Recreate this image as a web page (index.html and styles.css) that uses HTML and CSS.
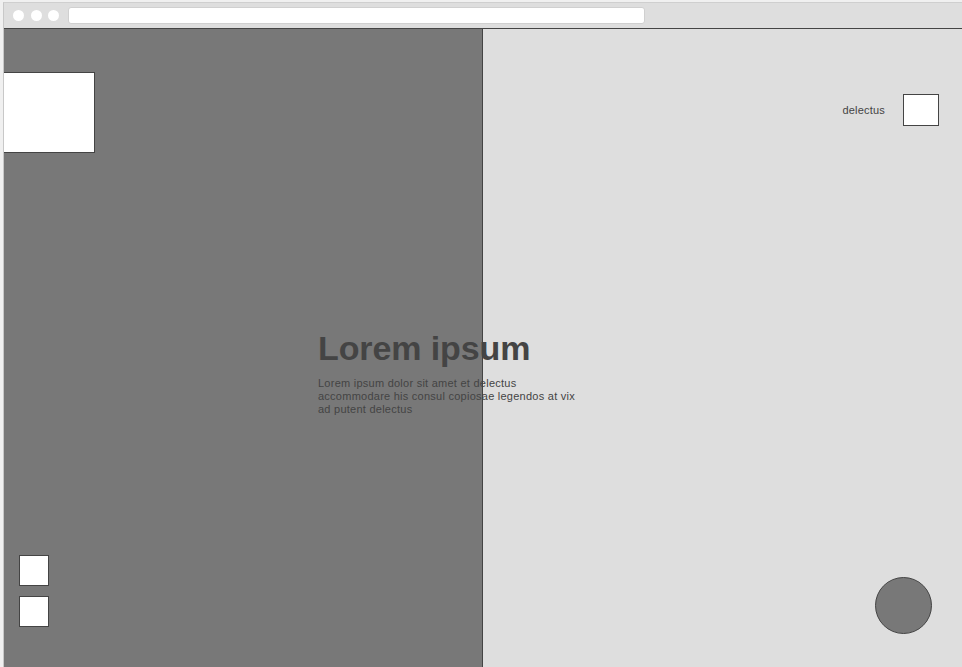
FILE: index.html
```html
<!DOCTYPE html>
<html>
<head>
<meta charset="utf-8">
<link rel="stylesheet" href="styles.css">
</head>
<body>
<div class="window">
  <div class="chrome">
    <div class="dots"><span class="dot"></span><span class="dot"></span><span class="dot"></span></div>
    <div class="address"></div>
  </div>
  <div class="content">
    <div class="left">
      <div class="logo-box"></div>
      <div class="side-buttons">
        <div class="sq"></div>
        <div class="sq"></div>
      </div>
    </div>
    <div class="right">
      <div class="topnav">
        <span class="nav-label">delectus</span>
        <div class="nav-box"></div>
      </div>
      <div class="fab"></div>
    </div>
    <div class="hero">
      <h1 class="hero-title">Lorem ipsum</h1>
      <p class="hero-text">Lorem ipsum dolor sit amet et delectus accommodare his consul copiosae legendos at vix ad putent delectus</p>
    </div>
  </div>
</div>
</body>
</html>
```

FILE: styles.css
```css
html, body {
  margin: 0;
  padding: 0;
  height: 100%;
  overflow: hidden;
}
body {
  background: #f0f0f0;
  font-family: "Liberation Sans", Arial, sans-serif;
}
.window {
  margin-left: 3px;
  margin-top: 2px;
  height: 665px;
  display: flex;
  flex-direction: column;
  border-left: 1px solid #c8c8c8;
  border-top: 1px solid #cfcfcf;
}
.chrome {
  height: 25px;
  background: #dedede;
  border-bottom: 1px solid #444;
  display: flex;
  align-items: center;
  padding-left: 9px;
  gap: 9px;
  flex: none;
}
.dots {
  display: flex;
  gap: 6.5px;
}
.dot {
  width: 11px;
  height: 11px;
  border-radius: 50%;
  background: #fff;
}
.address {
  width: 575px;
  height: 15px;
  background: #fff;
  border: 1px solid #d0d0d0;
  border-radius: 3px;
}
.content {
  flex: 1;
  display: flex;
  position: relative;
}
.left {
  width: 478px;
  background: #787878;
  border-right: 1px solid #444;
  display: flex;
  flex-direction: column;
  justify-content: space-between;
  padding-top: 43px;
  padding-bottom: 41px;
}
.logo-box {
  width: 90px;
  height: 79px;
  background: #fff;
  border: 1px solid #444;
  border-left: none;
}
.side-buttons {
  display: flex;
  flex-direction: column;
  gap: 10px;
  padding-left: 15px;
}
.sq {
  width: 28px;
  height: 29px;
  background: #fff;
  border: 1px solid #444;
}
.right {
  flex: 1;
  background: #dedede;
  display: flex;
  flex-direction: column;
  justify-content: space-between;
  padding: 65px 23px 34px 0;
}
.topnav {
  display: flex;
  align-items: center;
  justify-content: flex-end;
  gap: 18px;
}
.nav-label {
  font-size: 11px;
  color: #444;
  letter-spacing: 0.2px;
}
.nav-box {
  width: 34px;
  height: 30px;
  background: #fff;
  border: 1px solid #444;
}
.fab {
  align-self: flex-end;
  margin-right: 7px;
  width: 55px;
  height: 55px;
  border-radius: 50%;
  background: #787878;
  border: 1px solid #444;
}
.hero {
  position: absolute;
  left: 314px;
  top: 300px;
  width: 266px;
}
.hero-title {
  margin: 0;
  font-size: 34px;
  font-weight: bold;
  color: #444;
  line-height: 39px;
  letter-spacing: -0.1px;
}
.hero-text {
  margin: 9px 0 0;
  font-size: 11px;
  line-height: 13px;
  color: #444;
  letter-spacing: 0.25px;
}
```
